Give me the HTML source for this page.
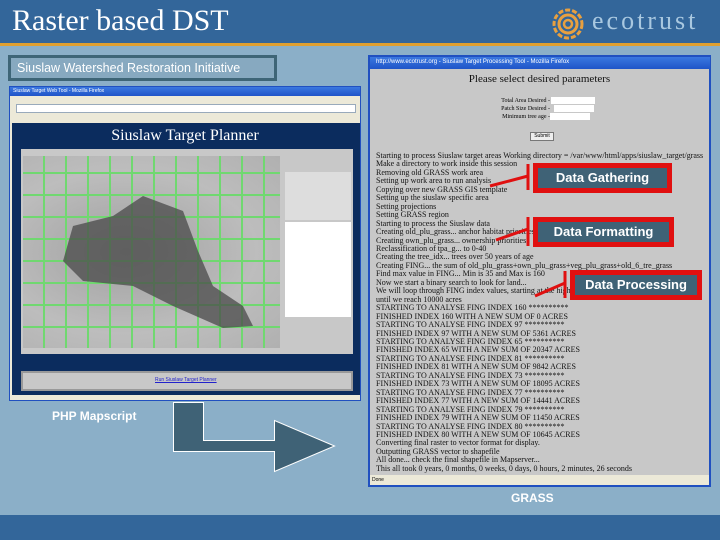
<!DOCTYPE html>
<html><head><style>
*{margin:0;padding:0;box-sizing:border-box}
body{width:720px;height:540px;position:relative;overflow:hidden;background:#8bafc8;font-family:"Liberation Sans",sans-serif}
.a{position:absolute}
.hdr{left:0;top:0;width:720px;height:43px;background:#33669a}
.or{left:0;top:43px;width:720px;height:3px;background:#e0a030}
.ftr{left:0;top:515px;width:720px;height:25px;background:#33669a}
.title{left:12px;top:4px;font-family:"Liberation Serif",serif;color:#fff;font-size:30px}
.eco{left:592px;top:6px;font-family:"Liberation Serif",serif;color:#a9c8e0;font-size:26px;letter-spacing:3px}
.lbl{left:8px;top:55px;width:269px;height:26px;border:3px solid #3e6577;background:#87a9c0;color:#fff;font-size:12.5px;padding:3px 0 0 6px}
.tb{background:linear-gradient(#3a78e0,#1f54c8);}
.rt{font-family:"Liberation Serif",serif;font-size:8px;line-height:8.45px;color:#111;white-space:nowrap}
.call{background:#3f6276;border:3px solid #e01010;outline:2px solid #e01010;color:#fff;font-weight:bold;font-size:13px;text-align:center;line-height:20px}
.grid{background:
repeating-linear-gradient(90deg,transparent 0 20px,#70d870 20px 22px),
repeating-linear-gradient(0deg,transparent 0 20px,#70d870 20px 22px),
radial-gradient(ellipse at 40% 50%,#a0a0a0,#bdbdbd 60%,#b0b0b0)}
</style></head><body>
<div class="a hdr"></div><div class="a or"></div><div class="a ftr"></div>
<div class="a title">Raster based DST</div>
<svg class="a" style="left:552px;top:8px" width="34" height="32" viewBox="0 0 34 32">
<circle cx="16" cy="16" r="14" fill="none" stroke="#e8a040" stroke-width="3" stroke-dasharray="5 2"/>
<circle cx="16" cy="16" r="9" fill="none" stroke="#e8a040" stroke-width="3"/>
<circle cx="16" cy="16" r="4" fill="none" stroke="#e8a040" stroke-width="2.5"/></svg>
<div class="a eco">ecotrust</div>
<div class="a lbl">Siuslaw Watershed Restoration Initiative</div>

<!-- left browser -->
<div class="a" style="left:9px;top:86px;width:352px;height:315px;background:#ece9d8;border:1px solid #2050c0">
<div class="a tb" style="left:0;top:0;width:350px;height:9px"></div>
<div class="a" style="left:3px;top:1px;font-size:5px;color:#fff">Siuslaw Target Web Tool - Mozilla Firefox</div>
<div class="a" style="left:6px;top:17px;width:340px;height:9px;background:#fff;border:1px solid #9ab"></div>
<div class="a" style="left:2px;top:36px;width:348px;height:272px;background:#0b2c5e"></div>
<div class="a" style="left:0;top:40px;width:350px;text-align:center;font-family:'Liberation Serif',serif;color:#fff;font-size:16px">Siuslaw Target Planner</div>
<div class="a" style="left:11px;top:62px;width:332px;height:205px;background:#c8c8c8"></div>
<div class="a grid" style="left:13px;top:69px;width:257px;height:192px"></div>
<svg class="a" style="left:13px;top:69px" width="257" height="192"><path d="M50 70 L90 60 L120 40 L160 55 L175 95 L190 130 L220 150 L230 170 L200 172 L150 150 L110 130 L60 125 L40 105 Z" fill="#4a4a4a" opacity=".75"/></svg>
<div class="a" style="left:275px;top:85px;width:66px;height:48px;background:#ddd"></div>
<div class="a" style="left:275px;top:135px;width:66px;height:95px;background:#fff"></div>
<div class="a" style="left:11px;top:284px;width:332px;height:20px;background:#c8c8c8;border:2px solid #999"></div>
<div class="a" style="left:145px;top:290px;font-size:5px;color:#22c;text-decoration:underline">Run Siuslaw Target Planner</div>
</div>

<!-- right browser -->
<div class="a" style="left:368px;top:55px;width:343px;height:432px;background:#c8c8c8;border:2px solid #2050c0">
<div class="a tb" style="left:0;top:0;width:340px;height:12px"></div>
<div class="a" style="left:6px;top:2px;font-size:6px;color:#fff">http://www.ecotrust.org - Siuslaw Target Processing Tool - Mozilla Firefox</div>
<div class="a" style="left:0;top:16px;width:339px;text-align:center;font-family:'Liberation Serif',serif;font-size:11px;color:#111">Please select desired parameters</div>
<div class="a" style="left:120px;top:40px;font-family:'Liberation Serif',serif;font-size:6px;line-height:8px;text-align:right;width:60px">Total Area Desired -<br>Patch Size Desired -<br>Minimum tree age -</div>
<div class="a" style="left:181px;top:40px;width:44px;height:7px;background:#fff"></div>
<div class="a" style="left:184px;top:48px;width:40px;height:7px;background:#fff"></div>
<div class="a" style="left:180px;top:56px;width:40px;height:7px;background:#fff"></div>
<div class="a" style="left:160px;top:75px;width:24px;height:9px;background:#eee;border:1px solid #777;font-size:5px;text-align:center">Submit</div>
<div class="a rt" style="left:6px;top:95px">Starting to process Siuslaw target areas Working directory = /var/www/html/apps/siuslaw_target/grass<br>Make a directory to work inside this session<br>Removing old GRASS work area<br>Setting up work area to run analysis<br>Copying over new GRASS GIS template<br>Setting up the siuslaw specific area<br>Setting projections<br>Setting GRASS region<br>Starting to process the Siuslaw data<br>Creating old_plu_grass... anchor habitat priorities<br>Creating own_plu_grass... ownership priorities<br>Reclassification of tpa_g... to 0-40<br>Creating the tree_idx... trees over 50 years of age<br>Creating FING... the sum of old_plu_grass+own_plu_grass+veg_plu_grass+old_6_tre_grass<br>Find max value in FING... Min is 35 and Max is 160<br>Now we start a binary search to look for land...<br>We will loop through FING index values, starting at the highest,<br>until we reach 10000 acres<br>STARTING TO ANALYSE FING INDEX 160 **********<br>FINISHED INDEX 160 WITH A NEW SUM OF 0 ACRES<br>STARTING TO ANALYSE FING INDEX 97 **********<br>FINISHED INDEX 97 WITH A NEW SUM OF 5361 ACRES<br>STARTING TO ANALYSE FING INDEX 65 **********<br>FINISHED INDEX 65 WITH A NEW SUM OF 20347 ACRES<br>STARTING TO ANALYSE FING INDEX 81 **********<br>FINISHED INDEX 81 WITH A NEW SUM OF 9842 ACRES<br>STARTING TO ANALYSE FING INDEX 73 **********<br>FINISHED INDEX 73 WITH A NEW SUM OF 18095 ACRES<br>STARTING TO ANALYSE FING INDEX 77 **********<br>FINISHED INDEX 77 WITH A NEW SUM OF 14441 ACRES<br>STARTING TO ANALYSE FING INDEX 79 **********<br>FINISHED INDEX 79 WITH A NEW SUM OF 11450 ACRES<br>STARTING TO ANALYSE FING INDEX 80 **********<br>FINISHED INDEX 80 WITH A NEW SUM OF 10645 ACRES<br>Converting final raster to vector format for display.<br>Outputting GRASS vector to shapefile<br>All done... check the final shapefile in Mapserver...<br>This all took 0 years, 0 months, 0 weeks, 0 days, 0 hours, 2 minutes, 26 seconds</div>
<div class="a" style="left:0;top:418px;width:339px;height:10px;background:#ece9d8;font-size:5px;padding:2px">Done</div>
</div>

<!-- callouts -->
<svg class="a" style="left:0;top:0" width="720" height="540">
<line x1="490" y1="186" x2="528" y2="176" stroke="#e01010" stroke-width="3"/>
<line x1="528" y1="164" x2="528" y2="190" stroke="#e01010" stroke-width="3"/>
<line x1="496" y1="240" x2="528" y2="229" stroke="#e01010" stroke-width="3"/>
<line x1="528" y1="217" x2="528" y2="246" stroke="#e01010" stroke-width="3"/>
<line x1="535" y1="296" x2="565" y2="283" stroke="#e01010" stroke-width="3"/>
<line x1="565" y1="271" x2="565" y2="298" stroke="#e01010" stroke-width="3"/>
<path d="M173.5 402.5 H203.5 V440.5 H274.5 V420.5 L334.5 446 L274.5 471.5 V451.5 H173.5 Z" fill="#3f6276" stroke="#fff" stroke-width="1"/>
</svg>
<div class="a call" style="left:535px;top:165px;width:135px;height:26px">Data Gathering</div>
<div class="a call" style="left:535px;top:219px;width:137px;height:26px">Data Formatting</div>
<div class="a call" style="left:572px;top:272px;width:128px;height:26px">Data Processing</div>

<div class="a" style="left:52px;top:409px;color:#fff;font-weight:bold;font-size:12px">PHP Mapscript</div>
<div class="a" style="left:511px;top:491px;color:#fff;font-weight:bold;font-size:12px">GRASS</div>
</body></html>
